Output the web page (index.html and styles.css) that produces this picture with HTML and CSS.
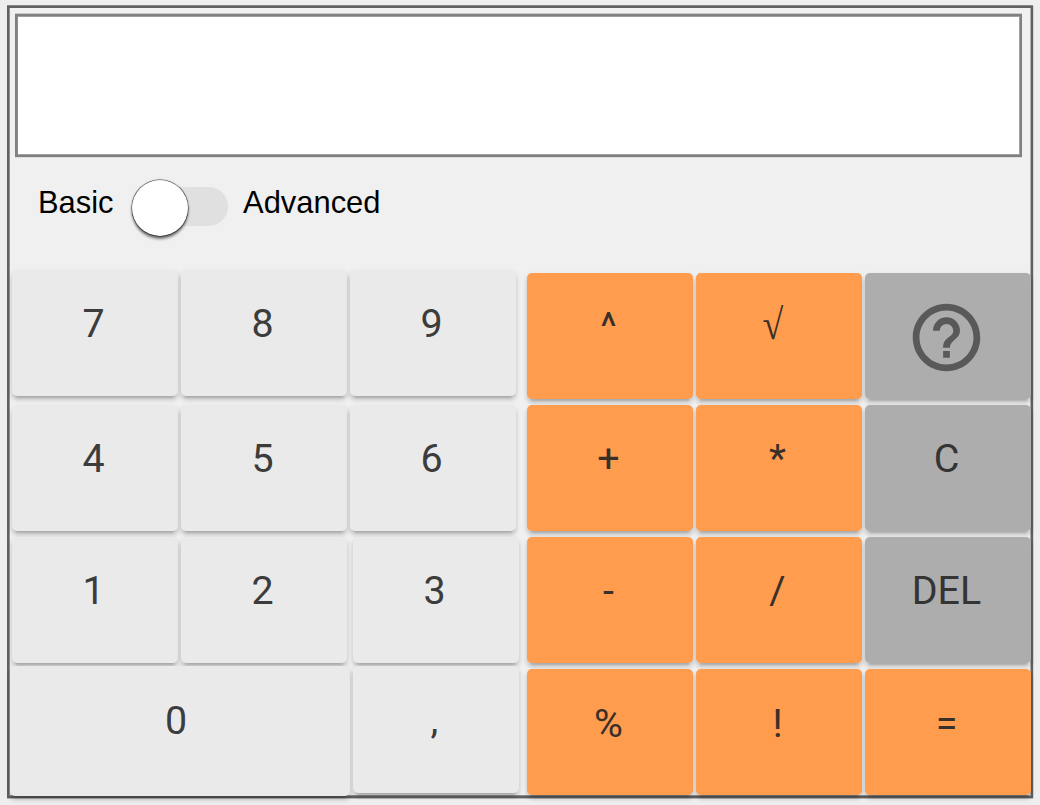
FILE: index.html
```html
<!DOCTYPE html>
<html lang="en">
<head>
<meta charset="utf-8">
<title>Calculator</title>
<link rel="stylesheet" href="styles.css">
</head>
<body>
<main class="calculator">
  <div class="display"></div>
  <div class="mode">
    <span class="mode-label">Basic</span>
    <span class="switch" role="switch" aria-checked="false"><span class="track"></span><span class="thumb"></span></span>
    <span class="mode-label">Advanced</span>
  </div>
  <div class="pads">
    <div class="numbers">
      <div class="row row-first"><button class="key">7</button><button class="key">8</button><button class="key">9</button></div>
      <div class="row row-second"><button class="key">4</button><button class="key">5</button><button class="key">6</button></div>
      <div class="row row-third"><button class="key">1</button><button class="key">2</button><button class="key key-shifted">3</button></div>
      <div class="row row-last"><button class="key key-zero">0</button><button class="key">,</button></div>
    </div>
    <div class="operators">
      <button class="key op">^</button><button class="key op"><span class="root">√</span></button>
      <button class="key util help" aria-label="Help"><svg class="help-icon" viewBox="0 0 24 24"><path d="M11 18h2v-2h-2v2zm1-16C6.48 2 2 6.48 2 12s4.480 10 10 10 10-4.480 10-10S17.520 2 12 2zm0 18c-4.410 0-8-3.590-8-8s3.590-8 8-8 8 3.590 8 8-3.590 8-8 8zm0-14c-2.210 0-4 1.790-4 4h2c0-1.100.9-2 2-2s2 .9 2 2c0 2-3 1.750-3 5h2c0-2.250 3-2.500 3-5 0-2.210-1.790-4-4-4z"/></svg></button>
      <button class="key op">+</button><button class="key op">*</button><button class="key util">C</button>
      <button class="key op">-</button><button class="key op">/</button><button class="key util">DEL</button>
      <button class="key op low">%</button><button class="key op low">!</button><button class="key op low">=</button>
    </div>
  </div>
</main>
</body>
</html>
```
FILE: styles.css
```css
* { box-sizing: border-box; }
body {
  margin: 0;
  padding: 6px 7px 7px;
  height: 805px;
  overflow: hidden;
  background: #eee;
  font-family: "Liberation Sans", Arial, sans-serif;
}
.calculator {
  height: 792px;
  border: 2px solid #616161;
  background: #f0f0f0;
  padding: 6px 0 0;
  box-shadow: 0 -1px 0 #858585, 0 1px 0 #b5b5b5, 1px 0 0 #d4d4d4,
    inset 1px 0 0 #8e8e8e, inset -1px 0 0 #b0b0b0, inset 0 -1px 0 #8e8e8e;
}
.display {
  height: 143px;
  margin: 0 9px 0 6px;
  border: 2px solid #808080;
  background: #fff;
  box-shadow: 0 -1px 0 #ccc, 0 1px 0 #ddd, inset 1px 0 0 #8e8e8e,
    inset 0 0 0 1px #a0a0a0;
}
.mode {
  display: flex;
  height: 113px;
  padding: 22px 0 0 29px;
}
.mode-label {
  font-size: 30.9px;
  line-height: 48px;
  color: #000;
}
.switch {
  position: relative;
  width: 97px;
  height: 58px;
  margin: 0 15.500px 0 17px;
}
.track {
  position: absolute;
  left: 4px;
  top: 8px;
  width: 93px;
  height: 39px;
  border-radius: 20px;
  background: #e0e0e0;
}
.thumb {
  position: absolute;
  left: 1px;
  top: 1px;
  width: 56px;
  height: 56px;
  border-radius: 50%;
  background: #fff;
  box-shadow: 0 0 1px 0.5px rgba(0, 0, 0, .8), 0 3px 3px rgba(0, 0, 0, .55);
}
.pads {
  display: flex;
  gap: 8px;
  padding-left: 1px;
}
.numbers { width: 509px; }
.row {
  display: flex;
  gap: 3px;
  padding-left: 2px;
}
.row-first { height: 135px; }
.row-second { height: 132px; }
.row-third { height: 129px; }
.row-last { padding-left: 0; }
.key {
  display: flex;
  justify-content: center;
  align-items: flex-start;
  flex: none;
  width: 166px;
  height: 126px;
  margin: 0;
  padding: 0 3px 0 0;
  border: 0;
  border-radius: 5px;
  background: #eaeaea;
  color: #3c3c3c;
  font: 400 39.4px/107px Roboto, sans-serif;
  box-shadow: 0 6px 2px -4px rgba(0, 0, 0, .12), 0 4px 4px rgba(0, 0, 0, .14),
    0 2px 6px rgba(0, 0, 0, .08);
}
.key-shifted { margin-left: 3px; }
.key-zero {
  width: 340px;
  height: 130px;
  padding-right: 8px;
  line-height: 109px;
}
.row-last .key:last-child { height: 127px; }
.operators {
  display: grid;
  grid-template-columns: repeat(3, 166px);
  grid-auto-rows: 126px;
  gap: 6px 3px;
  padding-top: 3px;
}
.op { background: #ff9c4e; color: #39302a; }
.util { background: #adadad; color: #343434; }
.low { line-height: 109px; }
.root {
  font-family: "Liberation Serif", serif;
  font-size: 43px;
  line-height: 103px;
  transform: translateX(-5px) scaleX(.88);
}
.help { padding-right: 4px; }
.help-icon {
  width: 81px;
  height: 81px;
  margin-top: 24px;
  fill: #595959;
}
```
